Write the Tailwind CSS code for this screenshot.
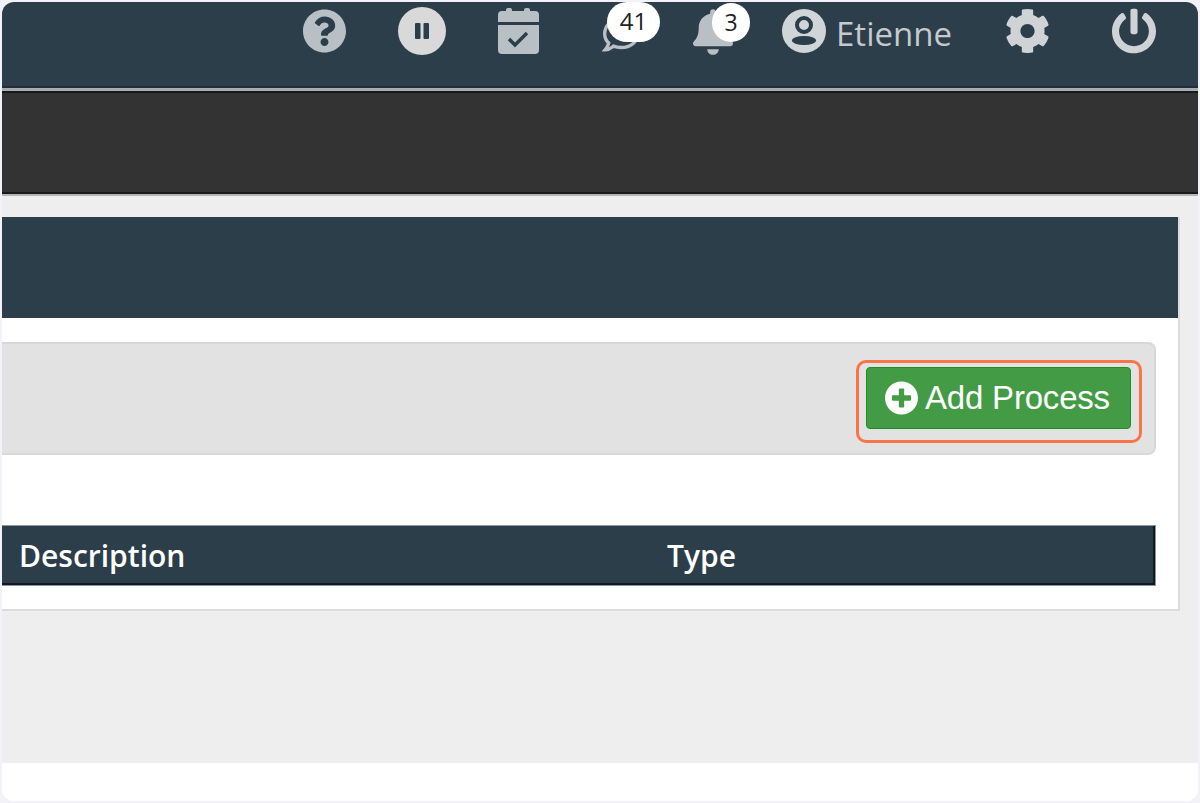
<!DOCTYPE html>
<html lang="en">
<head>
  <meta charset="UTF-8" />
  <meta name="viewport" content="width=device-width, initial-scale=1.0"/>
  <title>Processes</title>
  <script src="https://cdn.jsdelivr.net/npm/@tailwindcss/browser@4"></script>
</head>
<body class="bg-[#f2f2f8] h-[803px] overflow-hidden p-[2px] font-['Open_Sans',sans-serif]">
  <div class="h-[799px] w-[1196px] rounded-[12px] overflow-hidden bg-white flex flex-col">

    <!-- Top bar -->
    <header class="h-[84px] bg-[#2c3e4a] flex items-start justify-end pr-[42px] pt-[7px] text-[#cfd3d6]">
      <svg class="w-[43px] h-[44px] mr-[52px]" viewBox="8 8 496 496" fill="#b9c0c5"><path d="M504 256c0 136.997-111.043 248-248 248S8 392.997 8 256C8 119.083 119.043 8 256 8s248 111.083 248 248zM262.655 90c-54.497 0-89.255 22.957-116.549 63.758-3.536 5.286-2.353 12.415 2.715 16.258l34.699 26.310c5.205 3.947 12.621 3.008 16.665-2.122 17.864-22.658 30.113-35.797 57.303-35.797 20.429 0 45.698 13.148 45.698 32.958 0 14.976-12.363 22.667-32.534 33.976C247.128 238.528 216 254.941 216 296v4c0 6.627 5.373 12 12 12h56c6.627 0 12-5.373 12-12v-1.333c0-28.462 83.186-29.647 83.186-106.667 0-58.002-60.165-102-116.531-102zM256 338c-25.365 0-46 20.635-46 46 0 25.364 20.635 46 46 46s46-20.636 46-46c0-25.365-20.635-46-46-46z"/></svg>
      <svg class="w-[48px] h-[48px] -mt-[2px] mr-[52px]" viewBox="0 0 48 48"><circle cx="24" cy="24" r="24" fill="#d9d9d9"/><rect x="17" y="16" width="5.500" height="16" rx="1" fill="#2c3e4a"/><rect x="25.500" y="16" width="5.500" height="16" rx="1" fill="#2c3e4a"/></svg>
      <svg class="w-[41px] h-[46px] -mt-[1px] mr-[63px]" viewBox="0 0 41 46" fill="#b9c0c5"><rect x="8" y="0" width="6" height="6" rx="2"/><rect x="26" y="0" width="6" height="6" rx="2"/><path d="M4 3h33a4 4 0 0 1 4 4v7H0V7a4 4 0 0 1 4-4z"/><path d="M0 17h41v25a4 4 0 0 1-4 4H4a4 4 0 0 1-4-4z"/><path d="M11 31l6 6 12-12" fill="none" stroke="#2c3e4a" stroke-width="3.500"/></svg>

      <!-- Messages with badge -->
      <div class="relative w-[40px] h-[44px] mr-[51px]">
        <svg class="w-[38px] h-[36px] mt-[8px]" viewBox="0 0 512 512" fill="none" stroke="#b9c0c5" stroke-width="48"><path d="M256 32C114.600 32 24 125.100 24 240c0 49.600 21.400 95 57 130.700C68.500 421.100 30 466 30 466c66.300 0 94-31.800 118.600-51.400 32.700 12.300 69 19.400 107.400 19.400 141.400 0 232-81.100 232-194S397.400 32 256 32z"/></svg>
        <span class="absolute left-[5px] -top-[7px] w-[53px] h-[40px] rounded-full bg-white text-[#222] text-[24px] leading-[38px] text-center">41</span>
      </div>

      <!-- Alerts with badge -->
      <div class="relative w-[40px] h-[46px] mr-[49px]">
        <svg class="w-[40px] h-[46px]" viewBox="0 0 448 512" fill="#b9c0c5"><path d="M224 512c35.320 0 63.970-28.650 63.970-64H160.030c0 35.350 28.650 64 63.970 64zm215.390-149.710c-19.320-20.760-55.470-51.990-55.470-154.290 0-77.700-54.480-139.900-127.940-155.160V32c0-17.670-14.320-32-31.980-32s-31.980 14.330-31.980 32v20.840C118.560 68.100 64.080 130.300 64.080 208c0 102.300-36.150 133.530-55.470 154.290-6 6.450-8.660 14.160-8.610 21.710.11 16.400 12.980 32 32.100 32h383.800c19.120 0 32-15.600 32.100-32 .05-7.550-2.610-15.270-8.610-21.710z"/></svg>
        <span class="absolute left-[19px] -top-[6px] w-[38px] h-[39px] rounded-full bg-white text-[#222] text-[23px] leading-[38px] text-center">3</span>
      </div>

      <svg class="w-[44px] h-[44px] mr-[10px]" viewBox="0 0 44 44"><circle cx="22" cy="22" r="22" fill="#cfd5d9"/><circle cx="22" cy="16" r="7" fill="none" stroke="#2c3e4a" stroke-width="4"/><ellipse cx="22" cy="31.500" rx="12" ry="4.500" fill="#2c3e4a"/></svg>
      <span class="text-[33px] leading-[44px] mt-[3px] text-[#c4cacd] mr-[54px] font-['Open_Sans',sans-serif]">Etienne</span>
      <svg class="w-[43px] h-[44px] mr-[63px]" viewBox="16 8 480 496" fill="#d0d3d6"><path d="M487.400 315.700l-42.600-24.600c4.300-23.200 4.300-47 0-70.200l42.600-24.600c4.900-2.800 7.100-8.600 5.500-14-11.100-35.600-30-67.800-54.700-94.600-3.800-4.100-10-5.100-14.800-2.300L380.800 110c-17.900-15.400-38.500-27.300-60.800-35.100V25.800c0-5.600-3.900-10.500-9.400-11.700-36.700-8.200-74.300-7.800-109.200 0-5.500 1.200-9.400 6.100-9.400 11.700V75c-22.200 7.900-42.800 19.800-60.800 35.100L88.700 85.500c-4.900-2.800-11-1.900-14.800 2.300-24.700 26.700-43.600 58.900-54.700 94.600-1.700 5.400.6 11.200 5.500 14L67.300 221c-4.300 23.200-4.300 47 0 70.200l-42.600 24.600c-4.900 2.800-7.100 8.600-5.500 14 11.100 35.600 30 67.800 54.700 94.600 3.800 4.100 10 5.100 14.800 2.300l42.600-24.600c17.900 15.400 38.500 27.300 60.800 35.100v49.200c0 5.600 3.900 10.500 9.400 11.700 36.700 8.200 74.300 7.800 109.200 0 5.500-1.200 9.400-6.100 9.400-11.700v-49.200c22.200-7.900 42.800-19.800 60.800-35.100l42.600 24.600c4.900 2.800 11 1.900 14.800-2.300 24.700-26.700 43.600-58.900 54.700-94.600 1.500-5.500-.7-11.300-5.600-14.100zM256 336c-44.100 0-80-35.900-80-80s35.900-80 80-80 80 35.900 80 80-35.900 80-80 80z"/></svg>
      <svg class="w-[44px] h-[46px] -mt-[1px]" viewBox="8 0 496 504" fill="#d0d3d6"><path d="M400 54.100c63 45 104 118.600 104 201.900 0 136.800-110.800 247.700-247.500 248C120 504.300 8.200 393 8 256.400 7.900 173.100 48.900 99.300 111.800 54.200c11.700-8.300 28-4.800 35 7.700L162.600 90c5.900 10.500 3.100 23.800-6.600 31-41.500 30.800-68 79.600-68 134.900-.1 92.300 74.500 168.100 168 168.100 91.600 0 168.600-74.200 168-169.100-.3-51.800-24.700-101.800-68.100-134-9.700-7.200-12.400-20.500-6.500-30.900l15.800-28.100c7-12.400 23.200-16.100 34.800-7.800zM296 264V24c0-13.300-10.700-24-24-24h-32c-13.300 0-24 10.700-24 24v240c0 13.300 10.700 24 24 24h32c13.300 0 24-10.700 24-24z"/></svg>
    </header>

    <!-- Sub bar -->
    <div class="border-t-[2px] border-[#1f2f3a]"></div>
    <div class="border-t-[3px] border-[#a9adb0]"></div>
    <div class="h-[103px] bg-[#333333] border-y-[2px] border-[#1a1a1a]"></div>
    <div class="h-[2px] bg-[#b5b5b5]"></div>

    <!-- Content -->
    <main class="h-[567px] bg-[#eeeeee] pt-[21px] pr-[18px]">
      <section class="h-[394px] bg-white border-r-[2px] border-b-[2px] border-[#dcdcdc]">
        <div class="h-[101px] bg-[#2c3e4a]"></div>

        <div class="pr-[22px] pt-[24px]">
          <div class="h-[113px] bg-[#e2e2e2] border-2 border-l-0 border-[#d8d8d8] rounded-r-[8px] flex justify-end pt-[16px] pr-[12px]">
            <div class="w-[286px] h-[83px] border-[3px] border-[#fb7447] rounded-[10px] pt-[4px] pl-[7px]">
              <button class="w-[265px] h-[62px] bg-[#439c45] border border-[#1e8f22] rounded-[4px] flex items-center pl-[18px] text-white font-['Liberation_Sans',sans-serif] text-[33px] tracking-[-0.2px]">
                <svg class="w-[33px] h-[34px] mr-[7px]" viewBox="8 8 496 496" fill="#ffffff"><path d="M256 8C119 8 8 119 8 256s111 248 248 248 248-111 248-248S393 8 256 8zm144 276c0 6.600-5.400 12-12 12h-92v92c0 6.600-5.400 12-12 12h-56c-6.600 0-12-5.400-12-12v-92h-92c-6.600 0-12-5.400-12-12v-56c0-6.600 5.400-12 12-12h92v-92c0-6.600 5.400-12 12-12h56c6.600 0 12 5.400 12 12v92h92c6.600 0 12 5.400 12 12v56z"/></svg>
                Add Process
              </button>
            </div>
          </div>

          <div class="mt-[70px] h-[61px] bg-[#2c3e4a] border border-l-0 border-[#8f9599] flex items-center pl-[17px] text-white text-[30px] font-semibold shadow-[inset_-2px_-2px_0_#0c1a24]">
            <span class="w-[648px]">Description</span>
            <span>Type</span>
          </div>
        </div>
      </section>
    </main>

    <!-- Footer -->
    <footer class="flex-1 bg-white"></footer>
  </div>
</body>
</html>
